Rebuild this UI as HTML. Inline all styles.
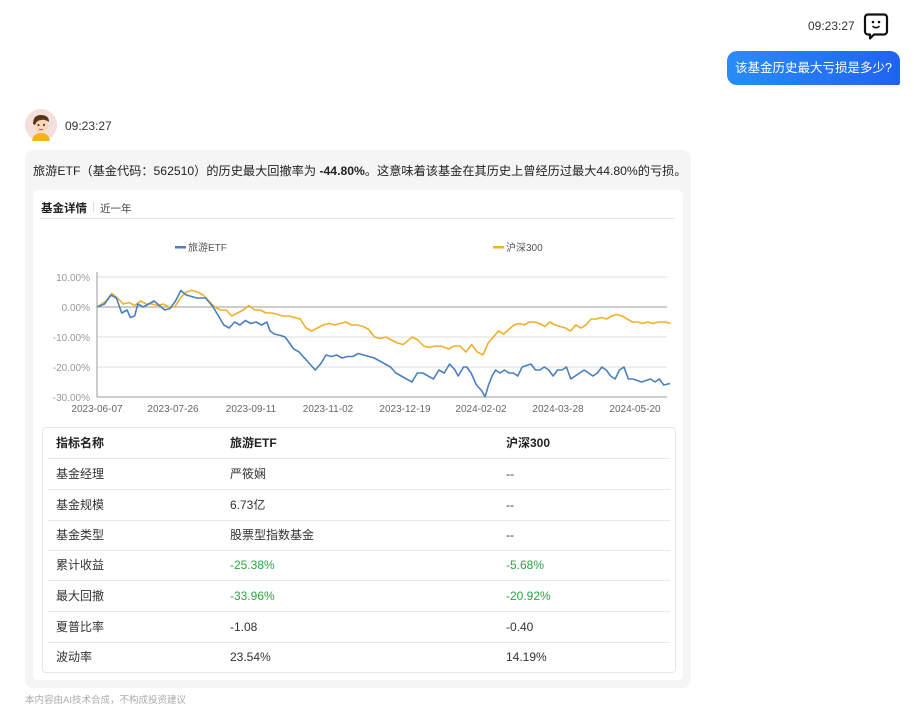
<!DOCTYPE html>
<html><head><meta charset="utf-8">
<style>
*{margin:0;padding:0;box-sizing:border-box}
body{width:914px;height:720px;background:#fff;font-family:"Liberation Sans","Noto Sans CJK SC",sans-serif;position:relative;overflow:hidden;color:#222}
.abs{position:absolute}
.time{font-size:12px;color:#333}
.bubble{left:727px;top:51px;width:173px;height:34px;border-radius:10px 10px 2px 10px;background:linear-gradient(90deg,#2a8cf8,#1f63f0);color:#fff;font-size:12.5px;line-height:34px;text-align:center}
.outer{left:25px;top:150px;width:666px;height:538px;background:#f5f5f5;border-radius:8px}
.msg{left:33px;top:161px;font-size:12.2px;color:#222;white-space:nowrap}
.card{left:33px;top:190px;width:650px;height:490px;background:#fff;border-radius:6px}
.tbl{left:42px;top:427px;width:634px;height:246px;border:1px solid #e6e6e6;border-radius:4px}
.row{position:absolute;left:5px;width:622px;height:31px;border-bottom:1px solid #e8e8e8;font-size:12px;line-height:30px;color:#333}
.row span{position:absolute}
.c1{left:8px}.c2{left:182px}.c3{left:458px}
.g{color:#2aa546}
.hd{font-weight:bold;color:#222}
</style></head><body>
<div class="abs time" style="left:808px;top:19px">09:23:27</div>
<svg class="abs" style="left:862px;top:12px" width="28" height="28" viewBox="0 0 28 28">
<path d="M6 2.5h16a3 3 0 0 1 3 3v14a3 3 0 0 1-3 3H12l-4 4v-4H6a3 3 0 0 1-3-3v-14a3 3 0 0 1 3-3z" fill="none" stroke="#111" stroke-width="2.2" stroke-linejoin="round"/>
<circle cx="11" cy="10" r="1.3" fill="#111"/><circle cx="17" cy="10" r="1.3" fill="#111"/>
<path d="M11 14.5q3 2.5 6 0" fill="none" stroke="#111" stroke-width="1.6" stroke-linecap="round"/>
</svg>
<div class="abs bubble">该基金历史最大亏损是多少?</div>

<svg class="abs" style="left:25px;top:109px" width="32" height="32" viewBox="0 0 32 32">
<circle cx="16" cy="16" r="16" fill="#f3dfdc"/>
<path d="M7 32q1-8 9-8t9 8z" fill="#f4b41a"/>
<ellipse cx="16" cy="16" rx="7" ry="7.5" fill="#fbd7b5"/>
<path d="M8 15q0-9 8-9t8 7q-4-3-8-2-4 0-6 5z" fill="#5a3418"/>
<circle cx="13.5" cy="16" r="1" fill="#222"/><circle cx="19" cy="16" r="1" fill="#222"/>
<path d="M14 20q2 1.5 4 0" stroke="#c44" fill="none"/>
</svg>
<div class="abs time" style="left:65px;top:119px">09:23:27</div>

<div class="abs outer"></div>
<div class="abs msg">旅游ETF（基金代码：562510）的历史最大回撤率为 <b>-44.80%</b>。这意味着该基金在其历史上曾经历过最大44.80%的亏损。</div>
<div class="abs card"></div>
<div class="abs" style="left:41px;top:200px;font-size:11.5px;font-weight:bold;color:#222">基金详情</div>
<div class="abs" style="left:93px;top:202px;width:1px;height:10px;background:#ddd"></div>
<div class="abs" style="left:100px;top:201px;font-size:10.5px;color:#444">近一年</div>
<div class="abs" style="left:40px;top:218px;width:635px;height:1px;background:#e3e3e3"></div>

<svg class="abs" style="left:0;top:0" width="914" height="720">
<g font-family="Liberation Sans,Noto Sans CJK SC,sans-serif" font-size="10" fill="#999">
<rect x="175" y="246" width="11" height="2.5" fill="#4a7fc0"/>
<text x="188" y="251" fill="#555">旅游ETF</text>
<rect x="493" y="246" width="11" height="2.5" fill="#f0b02a"/>
<text x="506" y="251" fill="#555">沪深300</text>
<g stroke="#ddd" stroke-width="1">
<line x1="97" y1="277" x2="667" y2="277"/><line x1="97" y1="337" x2="667" y2="337"/><line x1="97" y1="367" x2="667" y2="367"/>
</g>
<line x1="97" y1="307" x2="667" y2="307" stroke="#999"/>
<line x1="97" y1="397" x2="667" y2="397" stroke="#999"/>
<line x1="97" y1="272" x2="97" y2="397" stroke="#999"/>
<text x="90" y="281" text-anchor="end">10.00%</text>
<text x="90" y="311" text-anchor="end">0.00%</text>
<text x="90" y="341" text-anchor="end">-10.00%</text>
<text x="90" y="371" text-anchor="end">-20.00%</text>
<text x="90" y="401" text-anchor="end">-30.00%</text>
<g text-anchor="middle" fill="#666">
<text x="97" y="412">2023-06-07</text><text x="173" y="412">2023-07-26</text><text x="251" y="412">2023-09-11</text><text x="328" y="412">2023-11-02</text><text x="405" y="412">2023-12-19</text><text x="481" y="412">2024-02-02</text><text x="558" y="412">2024-03-28</text><text x="635" y="412">2024-05-20</text>
</g>
</g>
<g fill="none" stroke-width="1.6" stroke-linejoin="round">
<g transform="translate(97 307) scale(1.142 -3) translate(-97 0)"><polyline vector-effect="non-scaling-stroke" stroke="#f0b02a" points="97,0 105,2 110,4.5 115,3 120,1 125,1.5 130,0.5 135,2 140,1 145,1 150,0.5 155,1 160,0 165,0 170,3 175,5 180,5.5 185,5 190,4 195,2 200,0 205,-1 210,-1 215,-3 220,-2 225,-1 230,0.5 235,-1 240,-1 245,-2 250,-2 255,-2.5 260,-3 265,-3 270,-3.5 275,-4 280,-7 285,-8 290,-7 295,-6 300,-5.5 305,-6 310,-5.5 315,-5 320,-6 325,-6 330,-6.5 335,-7.5 340,-10 345,-10.5 350,-10 355,-11 360,-12 365,-12.5 370,-11 373,-10 378,-11 383,-13 388,-13.5 393,-13 398,-13 405,-14 410,-13 415,-13 420,-15 425,-12.5 430,-15 435,-16"/></g>
<g transform="translate(483 307) scale(1.03 -3) translate(-435 0)"><polyline vector-effect="non-scaling-stroke" stroke="#f0b02a" points="435,-16 440,-12 445,-10 450,-8 455,-9 460,-7.5 465,-6 470,-5.5 475,-6 480,-5 485,-5 490,-5.5 495,-6.5 500,-5 505,-6 510,-6.5 515,-7 520,-8 525,-6 530,-7 535,-6 540,-4 545,-4 550,-3.5 555,-4 560,-3 565,-2.5 570,-3 575,-4 580,-5 585,-5 590,-5.5 595,-5 600,-5.5 605,-5 612,-5 617,-5.5"/></g>
<g transform="translate(97 307) scale(1.075 -3) translate(-97 0)"><polyline vector-effect="non-scaling-stroke" stroke="#4a7fc0" points="97,0 104,1 110,4 115,3 120,-2 125,-1 128,-3.5 132,-3 135,1 140,0 145,1 150,2 155,0.5 160,-1 165,-0.5 170,2 175,5.5 180,4 190,3 198,3 205,0 210,-3 215,-6 220,-7 225,-5 230,-6 235,-4.5 240,-5.5 245,-5 250,-6 255,-5 258,-8 262,-9 268,-9.5 272,-10 276,-12 280,-14 285,-15 290,-17 295,-19 300,-21 305,-19 310,-16 315,-16.5 320,-16 325,-17 330,-16.5 335,-16.5 340,-15.5 345,-16 350,-16.5 355,-17 360,-18 365,-19 370,-20 375,-22 380,-23 385,-24 390,-25 395,-22 400,-22 405,-23 410,-24 415,-21 420,-22 425,-19 430,-21 433,-23 438,-20 441,-20 445,-22 450,-26 455,-28 458,-30"/></g>
<g transform="translate(485 307) scale(0.885 -3) translate(-458 0)"><polyline vector-effect="non-scaling-stroke" stroke="#4a7fc0" points="458,-30 462,-26 466,-23 470,-21 475,-22 480,-21 485,-22 490,-22 495,-23 500,-20 505,-19.5 510,-19 515,-21 520,-21 525,-20 530,-21 535,-23 540,-21 545,-21 550,-20 555,-24 560,-23 565,-22 570,-21 575,-22 580,-23 585,-22 590,-20 595,-21 600,-23 605,-24 610,-21 615,-20 620,-24 625,-24 630,-24.5 635,-25 640,-24.5 645,-24 650,-25 655,-24 660,-26 667,-25.5"/></g>
</g>
</svg>

<div class="abs tbl">
<div class="row" style="top:0"><span class="c1 hd">指标名称</span><span class="c2 hd">旅游ETF</span><span class="c3 hd">沪深300</span></div>
<div class="row" style="top:31px"><span class="c1">基金经理</span><span class="c2">严筱娴</span><span class="c3">--</span></div>
<div class="row" style="top:62px"><span class="c1">基金规模</span><span class="c2">6.73亿</span><span class="c3">--</span></div>
<div class="row" style="top:92px"><span class="c1">基金类型</span><span class="c2">股票型指数基金</span><span class="c3">--</span></div>
<div class="row" style="top:122px"><span class="c1">累计收益</span><span class="c2 g">-25.38%</span><span class="c3 g">-5.68%</span></div>
<div class="row" style="top:153px"><span class="c1">最大回撤</span><span class="c2 g">-33.96%</span><span class="c3 g">-20.92%</span></div>
<div class="row" style="top:184px"><span class="c1">夏普比率</span><span class="c2">-1.08</span><span class="c3">-0.40</span></div>
<div class="row" style="top:214px;border-bottom:none"><span class="c1">波动率</span><span class="c2">23.54%</span><span class="c3">14.19%</span></div>
</div>
<div class="abs" style="left:25px;top:692px;font-size:9.5px;color:#aaa">本内容由AI技术合成，不构成投资建议</div>
</body></html>
